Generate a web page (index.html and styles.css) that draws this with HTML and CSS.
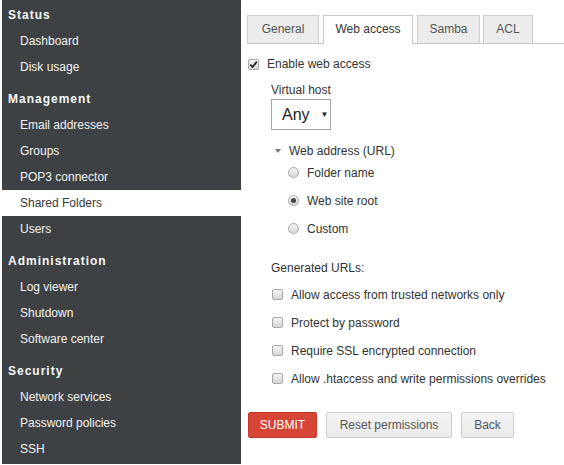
FILE: index.html
```html
<!DOCTYPE html>
<html>
<head>
<meta charset="utf-8">
<link rel="stylesheet" href="styles.css">
</head>
<body>
<div class="page">
  <nav class="sidebar">
    <div class="section">Status</div>
    <div class="item">Dashboard</div>
    <div class="item">Disk usage</div>
    <div class="section gap">Management</div>
    <div class="item">Email addresses</div>
    <div class="item">Groups</div>
    <div class="item">POP3 connector</div>
    <div class="item active">Shared Folders</div>
    <div class="item">Users</div>
    <div class="section gap">Administration</div>
    <div class="item">Log viewer</div>
    <div class="item">Shutdown</div>
    <div class="item">Software center</div>
    <div class="section gap">Security</div>
    <div class="item">Network services</div>
    <div class="item">Password policies</div>
    <div class="item">SSH</div>
  </nav>
  <main class="content">
    <div class="tabs">
      <div class="tab t-general">General</div>
      <div class="tab active t-web">Web access</div>
      <div class="tab t-samba">Samba</div>
      <div class="tab t-acl">ACL</div>
    </div>
    <div class="row enable">
      <span class="cb checked"><svg width="9" height="9" viewBox="0 0 9 9"><path d="M1.3 4.6 L3.6 7 L7.8 1.6" fill="none" stroke="#222" stroke-width="1.8"/></svg></span>
      <span class="enable-label">Enable web access</span>
    </div>
    <div class="label vh">Virtual host</div>
    <div class="select"><span class="sel-text">Any</span><span class="sel-arrow">▼</span></div>
    <div class="row webaddr"><span class="tri"></span><span>Web address (URL)</span></div>
    <div class="radios">
      <div class="row radio-row"><span class="radio"></span><span>Folder name</span></div>
      <div class="row radio-row"><span class="radio on"></span><span>Web site root</span></div>
      <div class="row radio-row"><span class="radio"></span><span>Custom</span></div>
    </div>
    <div class="label gen">Generated URLs:</div>
    <div class="checks">
      <div class="row check-row"><span class="cb"></span><span>Allow access from trusted networks only</span></div>
      <div class="row check-row"><span class="cb"></span><span>Protect by password</span></div>
      <div class="row check-row"><span class="cb"></span><span>Require SSL encrypted connection</span></div>
      <div class="row check-row"><span class="cb"></span><span>Allow .htaccess and write permissions overrides</span></div>
    </div>
    <div class="buttons">
      <button class="btn primary">SUBMIT</button>
      <button class="btn reset">Reset permissions</button>
      <button class="btn back">Back</button>
    </div>
  </main>
</div>
</body>
</html>
```
FILE: styles.css
```css
* { box-sizing: border-box; }
html, body { margin: 0; padding: 0; background: #fff; }
body { font-family: "Liberation Sans", Arial, sans-serif; font-size: 12px; color: #333; }
.page { display: flex; align-items: flex-start; }
.sidebar {
  width: 239px;
  margin-left: 2px;
  background: #3d4143;
  padding: 2px 0 2px 0;
  flex: none;
}
.section {
  height: 26px;
  line-height: 26px;
  padding-left: 6px;
  color: #f4f8fa;
  font-weight: bold;
  font-size: 12px;
  letter-spacing: 1px;
}
.section.gap { margin-top: 6px; }
.item {
  height: 26px;
  line-height: 26px;
  padding-left: 18px;
  color: #f2f2f2;
  font-size: 12px;
}
.item.active { background: #fff; color: #3a3a3a; }
.content { flex: 1; padding: 15px 0 0 6px; display: flex; flex-direction: column; align-items: flex-start; }
.tabs {
  display: flex;
  gap: 4px;
  border-bottom: 1px solid #c8c8c8;
  align-self: stretch;
  height: 29px;
}
.tab {
  height: 28px;
  line-height: 27px;
  text-align: center;
  border: 1px solid #cfcfcf;
  border-bottom: none;
  background: #ececec;
  color: #555;
  font-size: 12px;
}
.t-general { width: 72px; }
.t-web { width: 90px; }
.t-samba { width: 63px; }
.t-acl { width: 50px; margin-left: -1px; }
.tab.active { background: #fff; height: 29px; color: #333; border-color: #c8c8c8; }
.row { display: flex; align-items: center; }
.enable { height: 20px; margin-top: 10px; padding-left: 1px; }
.enable-label { margin-left: 8px; }
.cb {
  width: 11px; height: 11px;
  border: 1px solid #a9a9a9;
  border-radius: 2px;
  background: linear-gradient(#f4f4f4, #d6d6d6);
  display: flex; align-items: center; justify-content: center;
  flex: none;
}
.label { height: 16px; line-height: 16px; padding-left: 24px; }
.vh { margin-top: 8px; }
.select {
  margin-top: 1px;
  margin-left: 24px;
  width: 60px; height: 31px;
  border: 1px solid #a6a6a6;
  display: flex; align-items: center;
  padding-left: 10px;
}
.sel-text { font-size: 16px; color: #222; }
.sel-arrow { font-size: 8px; margin-left: 11px; color: #222; }
.webaddr { height: 16px; margin-top: 13px; padding-left: 28px; }
.tri {
  width: 0; height: 0;
  border-left: 3.5px solid transparent;
  border-right: 3.5px solid transparent;
  border-top: 4px solid #777;
  margin-right: 8px;
}
.radios { padding-left: 41px; }
.radio-row { height: 28px; }
.radio {
  width: 11px; height: 11px;
  border-radius: 50%;
  border: 1px solid #a9a9a9;
  background: linear-gradient(#f4f4f4, #d8d8d8);
  margin-right: 8px;
  display: flex; align-items: center; justify-content: center;
  position: relative;
  top: -1px;
}
.radio.on::after {
  content: "";
  width: 5px; height: 5px;
  border-radius: 50%;
  background: #444;
}
.gen { margin-top: 17px; }
.checks { margin-top: 5px; padding-left: 25px; }
.check-row { height: 28px; }
.check-row .cb { margin-right: 8px; position: relative; top: -1px; }
.buttons { display: flex; gap: 9px; margin-top: 19px; padding-left: 1px; }
.btn {
  height: 26px;
  font-family: "Liberation Sans", Arial, sans-serif;
  font-size: 12px;
  border-radius: 2px;
  padding: 0;
  cursor: pointer;
}
.primary {
  width: 69px;
  background: #d64536;
  border: 1px solid #c5392b;
  color: #fff;
}
.reset, .back {
  background: linear-gradient(#f5f5f5, #eaeaea);
  border: 1px solid #cfcfcf;
  color: #555;
}
.reset { width: 126px; }
.back { width: 53px; }
```
